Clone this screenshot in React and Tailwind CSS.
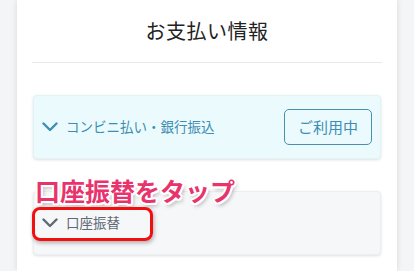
import React from 'react';

const jp = { fontFamily: '"Noto Sans CJK JP", "Noto Sans", sans-serif' };

function Chevron({ className }) {
  return (
    <svg className={className} width="16" height="10" viewBox="0 0 16 10" fill="none">
      <path d="M1.5 1.5L8 8L14.5 1.5" stroke="currentColor" strokeWidth="2.4" strokeLinecap="round" strokeLinejoin="round" />
    </svg>
  );
}

function PaymentRow({ label, active, children }) {
  const tone = active
    ? 'bg-[#ebfbfd] border-[#e2f3f6] text-[#3e8db3]'
    : 'bg-[#f6f7f9] border-[#eceef1] text-[#5f6974]';
  return (
    <div className={`flex items-center h-[64px] pl-[8px] pr-[8px] border rounded-[4px] shadow-[0_1px_3px_rgba(0,0,0,0.12)] ${tone}`}>
      <Chevron className={active ? 'text-[#3e8db3]' : 'text-[#5f6974]'} />
      <span className="ml-[8px] text-[13.5px] leading-none" style={jp}>
        {label}
      </span>
      <div className="ml-auto">{children}</div>
    </div>
  );
}

export default function App() {
  return (
    <div className="w-[414px] h-[271px] bg-[#f4f5f7] overflow-hidden" style={jp}>
      <div className="relative mx-[17px] w-[380px] h-full bg-white shadow-[0_0_6px_rgba(0,0,0,0.12)] px-[15px]">
        <div className="h-[63px] flex items-center justify-center border-b border-[#e8e9eb]">
          <h1 className="text-[20px] font-normal text-[#222] tracking-[0.5px]">お支払い情報</h1>
        </div>

        <div className="pt-[32px] px-[1px] flex flex-col gap-[32px]">
          <PaymentRow label="コンビニ払い・銀行振込" active>
            <button className="w-[88px] h-[36px] border border-[#4a8fb0] rounded-[5px] text-[15px] text-[#3e8db3] bg-transparent" style={jp}>
              ご利用中
            </button>
          </PaymentRow>
          <PaymentRow label="口座振替" />
        </div>

        <div
          className="absolute left-[18px] top-[178px] text-[25px] font-bold text-[#e8336d] leading-none whitespace-nowrap"
          style={{
            ...jp,
            textShadow:
              '1.5px 1.5px 0 #fff, -1.5px -1.5px 0 #fff, 1.5px -1.5px 0 #fff, -1.5px 1.5px 0 #fff, 0 2px 0 #fff, 2px 0 0 #fff, 0 -2px 0 #fff, -2px 0 0 #fff, 2px 3px 4px rgba(0,0,0,0.35)',
          }}
        >
          口座振替をタップ
        </div>

        <div className="absolute left-[15px] top-[207px] w-[121px] h-[34px] border-[3.5px] border-[#f20f0f] rounded-[8px] shadow-[1px_2px_4px_rgba(0,0,0,0.3)]" />
      </div>
    </div>
  );
}
